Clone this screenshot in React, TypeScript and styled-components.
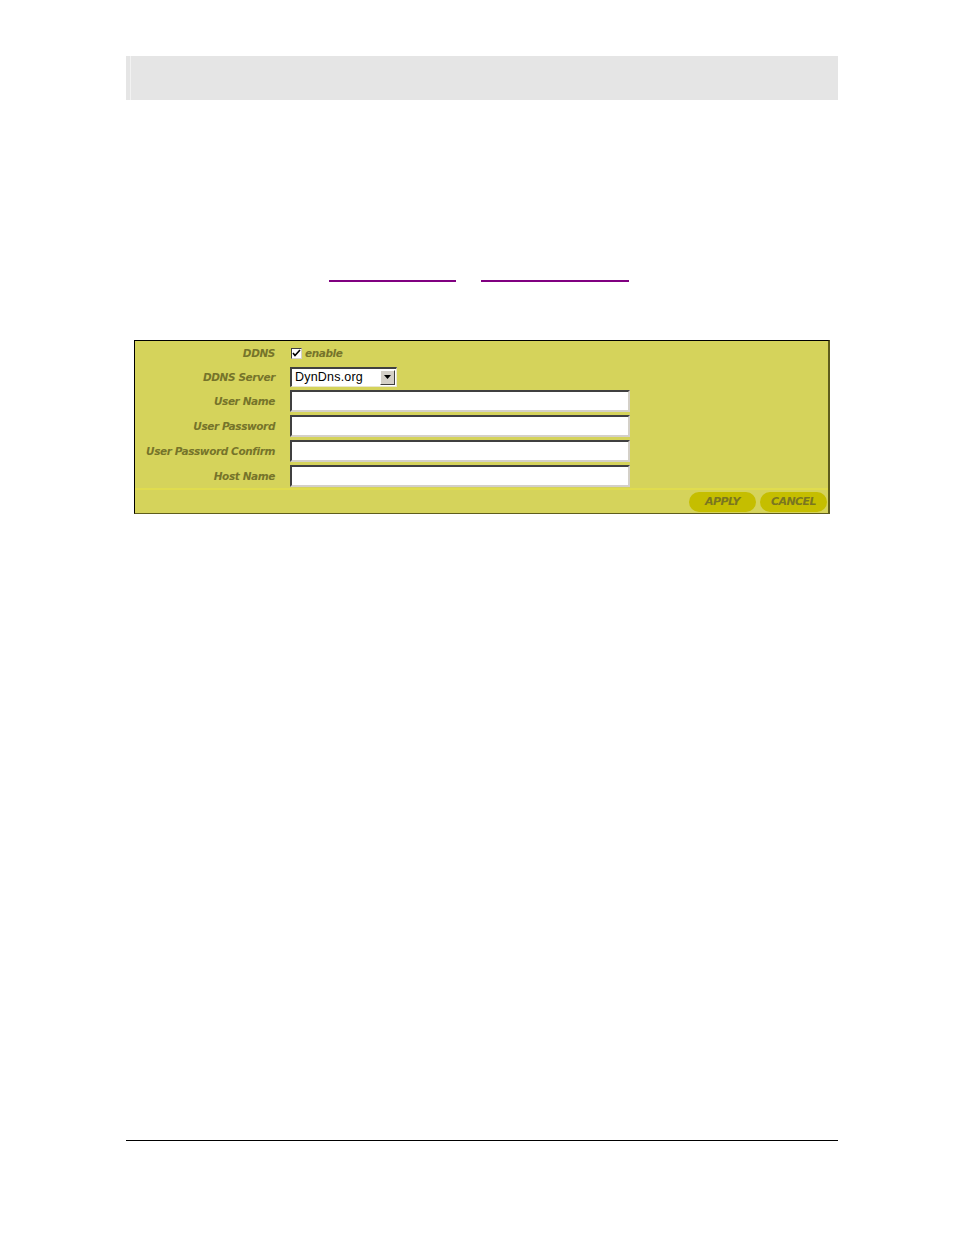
import React, { useState } from "react";
import styled, { createGlobalStyle } from "styled-components";

const GlobalStyle = createGlobalStyle`
  html, body {
    margin: 0;
    padding: 0;
    background: #ffffff;
  }
  body {
    font-family: "DejaVu Sans", Verdana, sans-serif;
  }
`;

const Page = styled.div`
  width: 712px;
  height: 1235px;
  margin-left: 126px;
  padding-top: 56px;
  box-sizing: border-box;
  display: flex;
  flex-direction: column;
`;

const HeaderBar = styled.div`
  height: 44px;
  background: #e5e5e5;
  display: flex;
`;

const HeaderEdge = styled.div`
  width: 4px;
  border-right: 1px solid #f2f2f2;
`;

const LinkRow = styled.div`
  display: flex;
  gap: 25px;
  margin: 168px 0 0 203px;
  height: 14px;
`;

const BlankLink = styled.a<{ $w: number }>`
  display: block;
  width: ${(p) => p.$w}px;
  height: 12px;
  border-bottom: 2px solid #800080;
`;

const Panel = styled.form`
  margin: 58px 0 0 8px;
  width: 696px;
  box-sizing: border-box;
  border-top: 1px solid #000000;
  border-left: 1px solid #000000;
  border-right: 2px solid #5f5d1c;
  border-bottom: 1px solid #5f5d1c;
  background: #d5d35b;
`;

const Row = styled.div<{ $h: number }>`
  display: grid;
  grid-template-columns: 140px 1fr;
  column-gap: 15px;
  align-items: center;
  height: ${(p) => p.$h}px;
`;

const Label = styled.label`
  text-align: right;
  font-size: 10.5px;
  font-weight: bold;
  font-style: italic;
  letter-spacing: -0.4px;
  color: #76742a;
  white-space: nowrap;
`;

const Field = styled.div`
  display: flex;
  align-items: center;
  gap: 3px;
`;

const Check = styled.span`
  width: 11px;
  height: 11px;
  box-sizing: border-box;
  background: #ffffff;
  border-top: 1px solid #404040;
  border-left: 1px solid #404040;
  border-right: 1px solid #d4d0c8;
  border-bottom: 1px solid #d4d0c8;
  display: flex;
  align-items: center;
  justify-content: center;
  margin-left: 1px;
`;

const CheckText = styled.span`
  font-size: 10.5px;
  font-weight: bold;
  font-style: italic;
  letter-spacing: -0.4px;
  color: #76742a;
`;

const SelectBox = styled.div`
  width: 107px;
  height: 20px;
  box-sizing: border-box;
  background: #ffffff;
  border-top: 2px solid #404040;
  border-left: 2px solid #404040;
  border-right: 1px solid #e8e6d0;
  border-bottom: 1px solid #e8e6d0;
  display: flex;
  align-items: center;
  justify-content: space-between;
`;

const SelectText = styled.span`
  font-family: "Liberation Sans", Arial, sans-serif;
  font-size: 12.5px;
  letter-spacing: 0.2px;
  color: #000000;
  padding-left: 3px;
`;

const SelectArrow = styled.span`
  width: 15px;
  height: 15px;
  box-sizing: border-box;
  background: #d4d0c8;
  border-top: 1px solid #ffffff;
  border-left: 1px solid #ffffff;
  border-right: 1px solid #404040;
  border-bottom: 1px solid #404040;
  display: flex;
  align-items: center;
  justify-content: center;
  margin-right: 1px;
`;

const TextInput = styled.input`
  width: 340px;
  height: 22px;
  box-sizing: border-box;
  margin: 0;
  padding: 0 3px;
  background: #ffffff;
  border-top: 2px solid #404040;
  border-left: 2px solid #404040;
  border-right: 2px solid #d4d0c8;
  border-bottom: 2px solid #d4d0c8;
  outline: none;
`;

const Footer = styled.div`
  height: 23px;
  border-top: 2px solid #e0dc4e;
  display: flex;
  justify-content: flex-end;
  align-items: center;
  gap: 4px;
  padding-right: 1px;
`;

const PillButton = styled.button`
  width: 67px;
  height: 20px;
  border: none;
  border-radius: 10px;
  background: #c5be00;
  color: #7a7620;
  font-family: "DejaVu Sans", Verdana, sans-serif;
  font-size: 11px;
  font-weight: 600;
  font-style: italic;
  letter-spacing: -0.6px;
  padding: 0;
  cursor: pointer;
`;

const BottomRule = styled.div`
  margin-top: auto;
  margin-bottom: 94px;
  border-top: 1px solid #000000;
`;

const fields = ["User Name", "User Password", "User Password Confirm", "Host Name"];

export default function App() {
  const [enabled] = useState(true);
  return (
    <>
      <GlobalStyle />
      <Page>
        <HeaderBar>
          <HeaderEdge />
        </HeaderBar>
        <LinkRow>
          <BlankLink $w={127} href="#" />
          <BlankLink $w={148} href="#" />
        </LinkRow>
        <Panel onSubmit={(e) => e.preventDefault()}>
          <Row $h={24}>
            <Label>DDNS</Label>
            <Field>
              <Check>
                {enabled && (
                  <svg width="9" height="9" viewBox="0 0 9 9">
                    <path d="M1 4 L3 6.5 L8 1" stroke="#000" strokeWidth="1.6" fill="none" />
                  </svg>
                )}
              </Check>
              <CheckText>enable</CheckText>
            </Field>
          </Row>
          <Row $h={23}>
            <Label>DDNS Server</Label>
            <Field>
              <SelectBox>
                <SelectText>DynDns.org</SelectText>
                <SelectArrow>
                  <svg width="7" height="4" viewBox="0 0 7 4">
                    <path d="M0 0 H7 L3.5 4 Z" fill="#000" />
                  </svg>
                </SelectArrow>
              </SelectBox>
            </Field>
          </Row>
          {fields.map((f) => (
            <Row key={f} $h={25}>
              <Label>{f}</Label>
              <Field>
                <TextInput type={f.includes("Password") ? "password" : "text"} />
              </Field>
            </Row>
          ))}
          <Footer>
            <PillButton type="submit">APPLY</PillButton>
            <PillButton type="button">CANCEL</PillButton>
          </Footer>
        </Panel>
        <BottomRule />
      </Page>
    </>
  );
}
